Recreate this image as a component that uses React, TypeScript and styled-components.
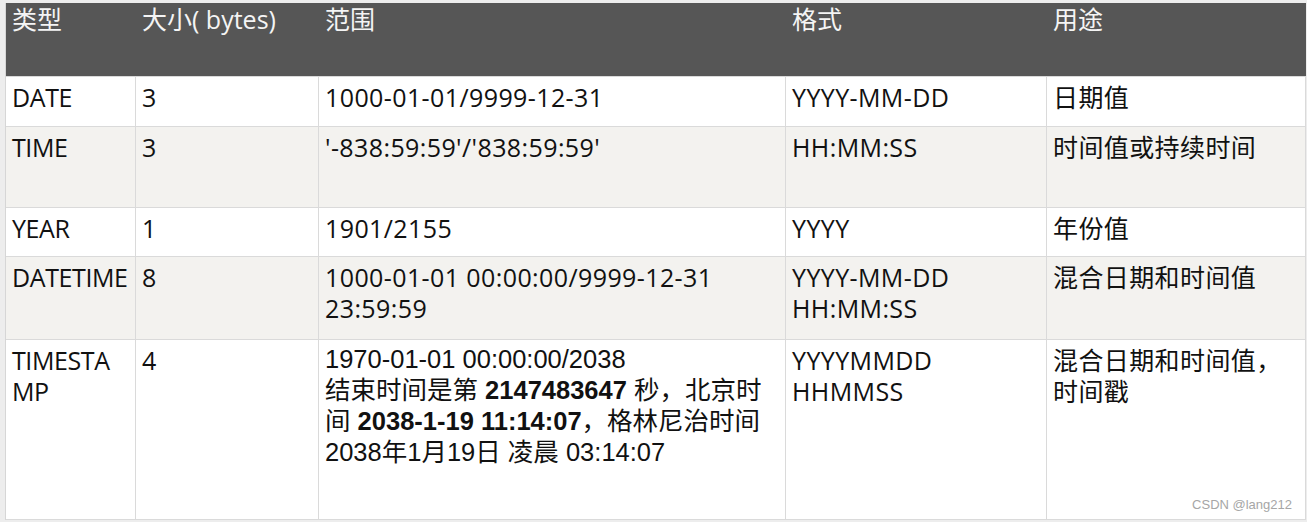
import React from 'react'
import styled, { createGlobalStyle } from 'styled-components'

const GlobalStyle = createGlobalStyle`
  html, body {
    margin: 0;
    padding: 0;
    background: #ececec;
  }
`

const Page = styled.div`
  position: relative;
  width: 1307px;
  height: 522px;
  box-sizing: border-box;
  padding: 3px 2px 2px 5px;
  background: #ededed;
  overflow: hidden;
`

const Grid = styled.div`
  display: grid;
  grid-template-columns: 130px 183px 467px 261px 259px;
  grid-template-rows: 74px 50px 81px 49px 83px 180px;
  background: #ffffff;
  border-left: 1px solid #d6d6d6;
  box-sizing: border-box;
`

const HeadCell = styled.div`
  background: #565656;
  color: #f4f4f4;
  font-family: 'Open Sans', 'Noto Sans CJK SC', sans-serif;
  font-size: 25px;
  line-height: 31px;
  padding: 1px 6px 0 6px;
  border-bottom: 1px solid #d9d9d9;
  box-sizing: border-box;
`

const Cell = styled.div<{ $shade?: boolean; $tight?: boolean }>`
  background: ${({ $shade }) => ($shade ? '#f3f2ef' : '#ffffff')};
  color: #111111;
  font-family: 'Open Sans', 'Noto Sans CJK SC', sans-serif;
  font-size: 25px;
  line-height: 31px;
  letter-spacing: ${({ $tight }) => ($tight ? '-0.4px' : '0.4px')};
  padding: 5px 4px 0 6px;
  border-right: 1px solid #dadada;
  border-bottom: 1px solid #dadada;
  box-sizing: border-box;
  white-space: nowrap;
  overflow: hidden;
`

const ArialText = styled.div`
  font-family: 'Liberation Sans', 'Noto Sans CJK SC', sans-serif;
  font-size: 25.5px;
  line-height: 31px;
  letter-spacing: 0;
  margin-top: -1px;

  b {
    font-weight: 700;
  }
`

const Watermark = styled.div`
  position: absolute;
  right: 15px;
  bottom: 10px;
  font-family: 'Liberation Sans', sans-serif;
  font-size: 13px;
  color: #a6a6a6;
`

const headers = ['类型', '大小( bytes)', '范围', '格式', '用途']

type Row = {
  type: React.ReactNode
  size: string
  range: React.ReactNode
  format: React.ReactNode
  use: React.ReactNode
}

const rows: Row[] = [
  { type: 'DATE', size: '3', range: '1000-01-01/9999-12-31', format: 'YYYY-MM-DD', use: '日期值' },
  {
    type: 'TIME',
    size: '3',
    range: "'-838:59:59'/'838:59:59'",
    format: 'HH:MM:SS',
    use: '时间值或持续时间',
  },
  { type: 'YEAR', size: '1', range: '1901/2155', format: 'YYYY', use: '年份值' },
  {
    type: 'DATETIME',
    size: '8',
    range: (
      <>
        1000-01-01 00:00:00/9999-12-31
        <br />
        23:59:59
      </>
    ),
    format: (
      <>
        YYYY-MM-DD
        <br />
        HH:MM:SS
      </>
    ),
    use: '混合日期和时间值',
  },
  {
    type: (
      <>
        TIMESTA
        <br />
        MP
      </>
    ),
    size: '4',
    range: (
      <ArialText>
        1970-01-01 00:00:00/2038
        <br />
        结束时间是第 <b>2147483647</b> 秒，北京时
        <br />
        间 <b>2038-1-19 11:14:07</b>，格林尼治时间
        <br />
        2038年1月19日 凌晨 03:14:07
      </ArialText>
    ),
    format: (
      <>
        YYYYMMDD
        <br />
        HHMMSS
      </>
    ),
    use: (
      <>
        混合日期和时间值，
        <br />
        时间戳
      </>
    ),
  },
]

export default function App() {
  return (
    <>
      <GlobalStyle />
      <Page>
        <Grid>
          {headers.map((h) => (
            <HeadCell key={h}>{h}</HeadCell>
          ))}
          {rows.map((r, i) => {
            const shade = i % 2 === 1
            return (
              <React.Fragment key={i}>
                <Cell $shade={shade} $tight>
                  {r.type}
                </Cell>
                <Cell $shade={shade}>{r.size}</Cell>
                <Cell $shade={shade}>{r.range}</Cell>
                <Cell $shade={shade}>{r.format}</Cell>
                <Cell $shade={shade}>{r.use}</Cell>
              </React.Fragment>
            )
          })}
        </Grid>
        <Watermark>CSDN @lang212</Watermark>
      </Page>
    </>
  )
}
